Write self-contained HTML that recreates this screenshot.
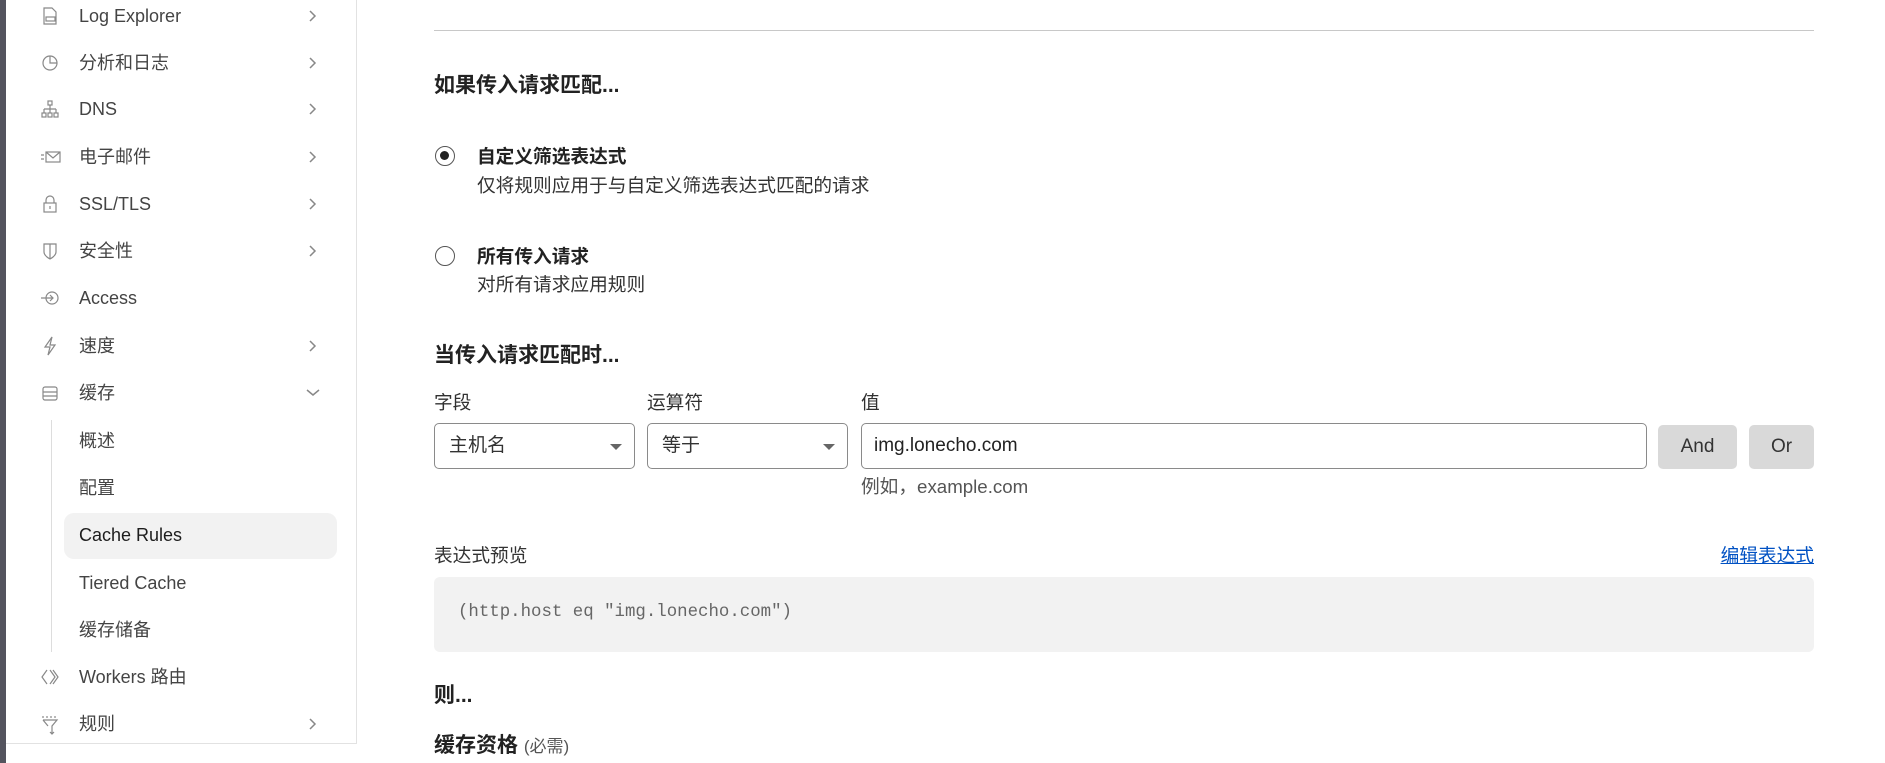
<!DOCTYPE html>
<html><head><meta charset="utf-8"><style>
*{box-sizing:border-box;margin:0;padding:0}
body{width:1885px;height:763px;overflow:hidden;background:#fff;font-family:"Liberation Sans","Noto Sans CJK SC",sans-serif;color:#313131;position:relative}
.lb{position:absolute;left:0;top:0;width:6px;height:763px;background:#54545e}
.sb{position:absolute;left:6px;top:0;width:351px;height:744px;border-right:1px solid #e2e2e2;border-bottom:1px solid #e2e2e2}
.it{position:absolute;left:0;font-size:18px;color:#444;height:24px;line-height:24px}
.it .t{position:absolute;left:73px;white-space:nowrap}
.it svg.ic{position:absolute;left:34px;top:2px}
.it .ch{position:absolute;left:302px;top:6px}
.act{position:absolute;left:58px;top:513px;width:273px;height:46px;background:#f2f2f2;border-radius:10px}
.sub{position:absolute;left:45px;top:420px;width:1px;height:232px;background:#ddd}
.m{position:absolute;font-size:18.7px;white-space:nowrap}
.b{font-weight:bold;color:#222;font-size:21px}
.radio{position:absolute;width:20px;height:20px;border:1.5px solid #555;border-radius:50%}
.sel{position:absolute;top:423px;height:46px;border:1px solid #8a8a8a;border-radius:5px;font-size:19px;line-height:44px;padding-left:14px;color:#333}
.dd:after{content:"";position:absolute;right:12px;top:20px;border-left:6px solid transparent;border-right:6px solid transparent;border-top:6px solid #666}
.btn{position:absolute;top:425px;height:44px;background:#d9d9d9;border-radius:5px;font-size:19px;line-height:44px;text-align:center;color:#333}
</style></head><body>
<div class="lb"></div>
<div class="sb">
<div class="act"></div>
<div class="sub"></div>
</div>
<div style="position:absolute;left:6px;top:0">
<div class="it" style="top:4px"><svg class="ic" width="20" height="20" viewBox="0 0 20 20" fill="none" stroke="#888" stroke-width="1.2"><path d="M4 2h8l4 4v12H4z"/><rect x="6" y="11" width="9" height="4"/></svg><span class="t">Log Explorer</span><svg class="ch" width="10" height="12"><path d="M2 1l5 5-5 5" fill="none" stroke="#888" stroke-width="1.5"/></svg></div>
<div class="it" style="top:51px"><svg class="ic" width="20" height="20" viewBox="0 0 20 20" fill="none" stroke="#888" stroke-width="1.2"><circle cx="10" cy="10" r="7"/><path d="M10 3v7h7"/></svg><span class="t">分析和日志</span><svg class="ch" width="10" height="12"><path d="M2 1l5 5-5 5" fill="none" stroke="#888" stroke-width="1.5"/></svg></div>
<div class="it" style="top:97px"><svg class="ic" width="20" height="20" viewBox="0 0 20 20" fill="none" stroke="#888" stroke-width="1.2"><rect x="8" y="2" width="4" height="4"/><path d="M10 6v4M4 10h12M4 10v4M10 10v4M16 10v4"/><rect x="2" y="14" width="4" height="4"/><rect x="8" y="14" width="4" height="4"/><rect x="14" y="14" width="4" height="4"/></svg><span class="t">DNS</span><svg class="ch" width="10" height="12"><path d="M2 1l5 5-5 5" fill="none" stroke="#888" stroke-width="1.5"/></svg></div>
<div class="it" style="top:145px"><svg class="ic" width="22" height="20" viewBox="0 0 22 20" fill="none" stroke="#888" stroke-width="1.2"><rect x="6" y="5" width="14" height="10"/><path d="M6 5l7 6 7-6M1 8h3M1 12h3"/></svg><span class="t">电子邮件</span><svg class="ch" width="10" height="12"><path d="M2 1l5 5-5 5" fill="none" stroke="#888" stroke-width="1.5"/></svg></div>
<div class="it" style="top:192px"><svg class="ic" width="20" height="20" viewBox="0 0 20 20" fill="none" stroke="#888" stroke-width="1.2"><rect x="4" y="9" width="12" height="9"/><path d="M6 9V6a4 4 0 0 1 8 0v3M10 12v3"/></svg><span class="t">SSL/TLS</span><svg class="ch" width="10" height="12"><path d="M2 1l5 5-5 5" fill="none" stroke="#888" stroke-width="1.5"/></svg></div>
<div class="it" style="top:239px"><svg class="ic" width="20" height="20" viewBox="0 0 20 20" fill="none" stroke="#888" stroke-width="1.2"><path d="M4 3h12v8c0 4-6 7-6 7s-6-3-6-7z M10 3v15"/></svg><span class="t">安全性</span><svg class="ch" width="10" height="12"><path d="M2 1l5 5-5 5" fill="none" stroke="#888" stroke-width="1.5"/></svg></div>
<div class="it" style="top:286px"><svg class="ic" width="22" height="20" viewBox="0 0 22 20" fill="none" stroke="#888" stroke-width="1.2"><circle cx="12" cy="10" r="6"/><path d="M1 10h12M10 7l3 3-3 3"/></svg><span class="t">Access</span></div>
<div class="it" style="top:334px"><svg class="ic" width="20" height="20" viewBox="0 0 20 20" fill="none" stroke="#888" stroke-width="1.2"><path d="M12 1L5 11h5l-2 8 7-10h-5z"/></svg><span class="t">速度</span><svg class="ch" width="10" height="12"><path d="M2 1l5 5-5 5" fill="none" stroke="#888" stroke-width="1.5"/></svg></div>
<div class="it" style="top:381px"><svg class="ic" width="20" height="20" viewBox="0 0 20 20" fill="none" stroke="#888" stroke-width="1.2"><rect x="3" y="4" width="14" height="13" rx="2"/><path d="M3 9h14M3 13h14"/></svg><span class="t">缓存</span><svg class="ch" width="14" height="12" style="left:300px"><path d="M1 3l6 5 6-5" fill="none" stroke="#888" stroke-width="1.5"/></svg></div>
<div class="it" style="top:429px"><span class="t">概述</span></div>
<div class="it" style="top:476px"><span class="t">配置</span></div>
<div class="it" style="top:523px;color:#1d1d1d"><span class="t">Cache Rules</span></div>
<div class="it" style="top:571px"><span class="t">Tiered Cache</span></div>
<div class="it" style="top:618px"><span class="t">缓存储备</span></div>
<div class="it" style="top:665px"><svg class="ic" width="20" height="20" viewBox="0 0 20 20" fill="none" stroke="#888" stroke-width="1.2"><path d="M7 3L2 10l5 7M10 3l5 7-5 7M13 3l5 7-5 7"/></svg><span class="t">Workers 路由</span></div>
<div class="it" style="top:712px"><svg class="ic" width="20" height="22" viewBox="0 0 20 22" fill="none" stroke="#888" stroke-width="1.2"><path d="M3 6h14l-5 6v8M8 12l-5-6M3 2v2M7 2v2M11 2v2M15 2v2M10 18l2 2 2-2"/></svg><span class="t">规则</span><svg class="ch" width="10" height="12"><path d="M2 1l5 5-5 5" fill="none" stroke="#888" stroke-width="1.5"/></svg></div>
</div>

<div style="position:absolute;left:434px;top:30px;width:1380px;height:1px;background:#c8c8c8"></div>
<div class="m b" style="left:434px;top:69px">如果传入请求匹配...</div>
<div class="radio" style="left:435px;top:146px"><div style="position:absolute;left:4px;top:4px;width:9px;height:9px;border-radius:50%;background:#222"></div></div>
<div class="m" style="left:477px;top:142px;font-weight:bold;color:#222">自定义筛选表达式</div>
<div class="m" style="left:477px;top:171px;color:#333">仅将规则应用于与自定义筛选表达式匹配的请求</div>
<div class="radio" style="left:435px;top:246px"></div>
<div class="m" style="left:477px;top:242px;font-weight:bold;color:#222">所有传入请求</div>
<div class="m" style="left:477px;top:270px;color:#333">对所有请求应用规则</div>
<div class="m b" style="left:434px;top:339px">当传入请求匹配时...</div>
<div class="m" style="left:434px;top:388px">字段</div>
<div class="m" style="left:647px;top:388px">运算符</div>
<div class="m" style="left:861px;top:388px">值</div>
<div class="sel dd" style="left:434px;width:201px">主机名</div>
<div class="sel dd" style="left:647px;width:201px">等于</div>
<div class="sel" style="left:861px;width:786px;padding-left:12px;color:#222">img.lonecho.com</div>
<div class="btn" style="left:1658px;width:79px">And</div>
<div class="btn" style="left:1749px;width:65px">Or</div>
<div class="m" style="left:861px;top:472px;color:#555">例如，example.com</div>
<div class="m" style="left:434px;top:541px;color:#333">表达式预览</div>
<div class="m" style="right:71px;top:541px;color:#0051c3;text-decoration:underline">编辑表达式</div>
<div style="position:absolute;left:434px;top:577px;width:1380px;height:75px;background:#f2f2f2;border-radius:6px"></div>
<div class="m" style="left:458px;top:603px;font-family:'Liberation Mono',monospace;font-size:17.4px;color:#666">(http.host eq "img.lonecho.com")</div>
<div class="m b" style="left:434px;top:679px">则...</div>
<div class="m b" style="left:434px;top:729px">缓存资格 <span style="font-weight:normal;font-size:17px;color:#555">(必需)</span></div>
</body></html>
